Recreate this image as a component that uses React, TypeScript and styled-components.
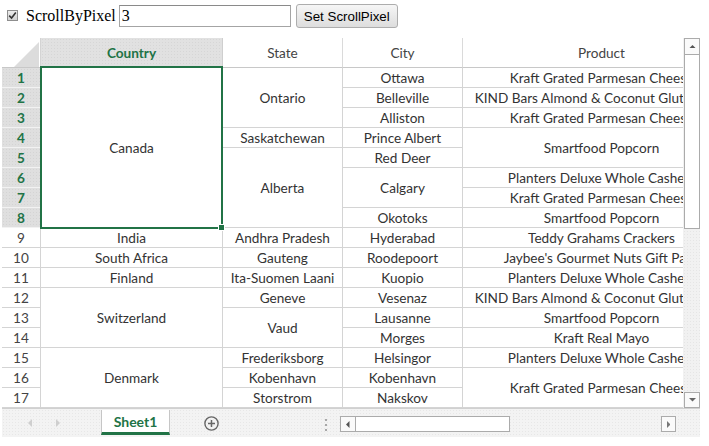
import React from "react";
import styled, { createGlobalStyle, css } from "styled-components";

const GREEN = "#217346";
const GRID = "#d4d4d4";
const FONT = `"Lato", "Open Sans", sans-serif`;

const Global = createGlobalStyle`
  html, body { margin: 0; padding: 0; background: #fff; }
  body { font-family: "Liberation Serif", serif; }
`;

const dotted = css`
  background-image: radial-gradient(rgba(0, 0, 0, 0.05) 0.8px, transparent 0.9px);
  background-size: 3px 3px;
`;

const Page = styled.div`
  width: 709px;
  height: 446px;
  overflow: hidden;
`;

const Toolbar = styled.div`
  display: flex;
  align-items: center;
  height: 24px;
  padding: 4px 0 0 7px;
`;

const CheckBox = styled.span`
  width: 11px;
  height: 11px;
  box-sizing: border-box;
  border: 1px solid #8e8e8e;
  background: linear-gradient(#ececec, #d2d2d2);
  display: flex;
  align-items: center;
  justify-content: center;
  margin: -2px 8px 0 0;
`;

const Label = styled.span`
  font: 16px "Liberation Serif", serif;
  color: #000;
  margin-right: 3px;
`;

const TextInput = styled.input`
  width: 172px;
  height: 22px;
  box-sizing: border-box;
  border: 1px solid #a4a4a4;
  border-top-color: #8a8a8a;
  padding: 0 2px;
  margin: 0 5px 0 0;
  font: 16px "Liberation Serif", serif;
  color: #000;
  outline: none;
`;

const Button = styled.button`
  width: 102px;
  height: 24px;
  box-sizing: border-box;
  padding: 0;
  border: 1px solid #adadad;
  border-radius: 3px;
  background: linear-gradient(#f6f6f6, #dddddd);
  font: 13.33px "Liberation Sans", Arial, sans-serif;
  color: #000;
`;

const Sheet = styled.div`
  margin: 10px 0 0 2px;
  width: 698px;
  display: grid;
  grid-template-columns: 681px 17px;
  grid-template-rows: 370px 29px;
`;

const Viewport = styled.div`
  position: relative;
  overflow: hidden;
  display: grid;
  grid-template-columns: 39px 182px 120px 120px 278px;
  grid-template-rows: 30px repeat(17, 20px);
  align-content: start;
  font-family: ${FONT};
  font-size: 13.6px;
`;

const Cell = styled.div<{ $row: number; $col: number; $span?: number }>`
  grid-row: ${(p) => p.$row} / span ${(p) => p.$span ?? 1};
  grid-column: ${(p) => p.$col};
  box-sizing: border-box;
  border-right: 1px solid ${GRID};
  border-bottom: 1px solid ${GRID};
  display: flex;
  align-items: center;
  justify-content: safe center;
  overflow: hidden;
  white-space: nowrap;
  color: #333;
  background: #fff;
`;

const Corner = styled.div`
  grid-row: 1;
  grid-column: 1;
  box-sizing: border-box;
  border-right: 1px solid ${GRID};
  border-bottom: 1px solid #c8c8c8;
  background: #fff;
  display: flex;
`;

const ColHead = styled.div<{ $col: number; $active?: boolean }>`
  grid-row: 1;
  grid-column: ${(p) => p.$col};
  box-sizing: border-box;
  border-right: 1px solid ${(p) => (p.$active ? "#cfcfcf" : "#dadada")};
  border-bottom: 1px solid #c8c8c8;
  display: flex;
  align-items: center;
  justify-content: center;
  overflow: hidden;
  white-space: nowrap;
  color: ${(p) => (p.$active ? GREEN : "#444")};
  font-weight: ${(p) => (p.$active ? 700 : 400)};
  background-color: ${(p) => (p.$active ? "#e1e1e1" : "#fff")};
  ${(p) => p.$active && dotted}
`;

const RowHead = styled.div<{ $row: number; $active?: boolean }>`
  grid-row: ${(p) => p.$row};
  grid-column: 1;
  box-sizing: border-box;
  border-right: 1px solid ${(p) => (p.$active ? "#cfcfcf" : GRID)};
  border-bottom: 1px solid ${(p) => (p.$active ? "#f2f2f2" : GRID)};
  display: flex;
  align-items: center;
  justify-content: center;
  color: ${(p) => (p.$active ? GREEN : "#444")};
  font-weight: ${(p) => (p.$active ? 700 : 400)};
  background-color: ${(p) => (p.$active ? "#dfdfdf" : "#fff")};
  ${(p) => p.$active && dotted}
`;

const Selection = styled.div`
  position: absolute;
  left: 38px;
  top: 28px;
  width: 183px;
  height: 163px;
  box-sizing: border-box;
  border: 2px solid ${GREEN};
  pointer-events: none;
`;

const Handle = styled.div`
  position: absolute;
  right: -4px;
  bottom: -4px;
  width: 7px;
  height: 7px;
  box-sizing: border-box;
  background: ${GREEN};
  border: 1px solid #fff;
`;

const VScroll = styled.div`
  padding-left: 1px;
  display: flex;
  flex-direction: column;
  background-color: #f1f1f1;
  ${dotted}
`;

const ScrollBtn = styled.div<{ $w?: number; $h?: number }>`
  width: ${(p) => p.$w ?? 16}px;
  height: ${(p) => p.$h ?? 17}px;
  flex: none;
  box-sizing: border-box;
  border: 1px solid #ababab;
  background: #fafafa;
  display: flex;
  align-items: center;
  justify-content: center;
`;

const VThumb = styled.div`
  width: 16px;
  height: 174px;
  box-sizing: border-box;
  border: 1px solid #ababab;
  border-top: none;
  background: #fff;
`;

const Fill = styled.div<{ $fixed?: number }>`
  flex: ${(p) => (p.$fixed ? `0 0 ${p.$fixed}px` : "1")};
`;

const TabBar = styled.div`
  grid-column: 1 / -1;
  display: flex;
  align-items: flex-start;
  border-top: 1px solid #d0d0d0;
  background-color: #f3f3f3;
  ${dotted}
  font-family: ${FONT};
`;

const Nav = styled.div`
  width: 99px;
  height: 28px;
  display: flex;
  align-items: center;
  gap: 24px;
  padding-left: 26px;
  box-sizing: border-box;
`;

const Tab = styled.div`
  width: 69px;
  height: 25px;
  margin-top: 1px;
  box-sizing: border-box;
  border-left: 1px solid #c6c6c6;
  border-right: 1px solid #c6c6c6;
  border-bottom: 3px solid ${GREEN};
  background: #fff;
  display: flex;
  align-items: center;
  justify-content: center;
  font-size: 14px;
  font-weight: 700;
  color: ${GREEN};
`;

const AddBtn = styled.div`
  margin: 7px 0 0 34px;
  width: 15px;
  height: 15px;
  display: flex;
`;

const Splitter = styled.div`
  margin: 10px 0 0 106px;
  width: 3px;
  display: flex;
  flex-direction: column;
  gap: 3px;
`;

const Dot = styled.span`
  width: 2px;
  height: 2px;
  background: #a8a8a8;
`;

const HScroll = styled.div`
  margin: 7px 0 0 12px;
  width: 339px;
  height: 16px;
  display: flex;
`;

const HThumb = styled.div`
  width: 154px;
  height: 16px;
  box-sizing: border-box;
  border: 1px solid #ababab;
  border-left: none;
  background: #fff;
`;

const Tri = ({ dir, color = "#555", size = 4 }: { dir: "up" | "down" | "left" | "right"; color?: string; size?: number }) => {
  const s = size;
  const pts =
    dir === "up"
      ? `0,${s} ${s},0 ${2 * s},${s}`
      : dir === "down"
      ? `0,0 ${2 * s},0 ${s},${s}`
      : dir === "left"
      ? `${s},0 ${s},${2 * s} 0,${s}`
      : `0,0 0,${2 * s} ${s},${s}`;
  const w = dir === "up" || dir === "down" ? 2 * s : s;
  const h = dir === "up" || dir === "down" ? s : 2 * s;
  return (
    <svg width={w} height={h} viewBox={`0 0 ${w} ${h}`}>
      <polygon points={pts} fill={color} />
    </svg>
  );
};

type Span = [string, number, number];

const countries: Span[] = [
  ["Canada", 1, 8],
  ["India", 9, 1],
  ["South Africa", 10, 1],
  ["Finland", 11, 1],
  ["Switzerland", 12, 3],
  ["Denmark", 15, 3],
];

const states: Span[] = [
  ["Ontario", 1, 3],
  ["Saskatchewan", 4, 1],
  ["Alberta", 5, 4],
  ["Andhra Pradesh", 9, 1],
  ["Gauteng", 10, 1],
  ["Ita-Suomen Laani", 11, 1],
  ["Geneve", 12, 1],
  ["Vaud", 13, 2],
  ["Frederiksborg", 15, 1],
  ["Kobenhavn", 16, 1],
  ["Storstrom", 17, 1],
];

const cities: Span[] = [
  ["Ottawa", 1, 1],
  ["Belleville", 2, 1],
  ["Alliston", 3, 1],
  ["Prince Albert", 4, 1],
  ["Red Deer", 5, 1],
  ["Calgary", 6, 2],
  ["Okotoks", 8, 1],
  ["Hyderabad", 9, 1],
  ["Roodepoort", 10, 1],
  ["Kuopio", 11, 1],
  ["Vesenaz", 12, 1],
  ["Lausanne", 13, 1],
  ["Morges", 14, 1],
  ["Helsingor", 15, 1],
  ["Kobenhavn", 16, 1],
  ["Nakskov", 17, 1],
];

const KRAFT = "Kraft Grated Parmesan Cheese";
const KIND = "KIND Bars Almond & Coconut Gluten Free";
const SMART = "Smartfood Popcorn";
const PLANT = "Planters Deluxe Whole Cashew";

const products: Span[] = [
  [KRAFT, 1, 1],
  [KIND, 2, 1],
  [KRAFT, 3, 1],
  [SMART, 4, 2],
  [PLANT, 6, 1],
  [KRAFT, 7, 1],
  [SMART, 8, 1],
  ["Teddy Grahams Crackers", 9, 1],
  ["Jaybee's Gourmet Nuts Gift Pack", 10, 1],
  [PLANT, 11, 1],
  [KIND, 12, 1],
  [SMART, 13, 1],
  ["Kraft Real Mayo", 14, 1],
  [PLANT, 15, 1],
  [KRAFT, 16, 2],
];

const columns: Span[][] = [countries, states, cities, products];
const headers = ["Country", "State", "City", "Product"];

export default function App() {
  const rows = Array.from({ length: 17 }, (_, i) => i + 1);
  return (
    <Page>
      <Global />
      <Toolbar>
        <CheckBox>
          <svg width="9" height="9" viewBox="0 0 9 9">
            <path d="M1.2 4.6 L3.6 7 L7.8 1.6" fill="none" stroke="#333" strokeWidth="1.6" />
          </svg>
        </CheckBox>
        <Label>ScrollByPixel</Label>
        <TextInput defaultValue="3" />
        <Button>Set ScrollPixel</Button>
      </Toolbar>
      <Sheet>
        <Viewport>
          <Corner>
            <svg width="38" height="29" viewBox="0 0 38 29">
              <polygon points="37,4 37,29 12,29" fill="#dcdcdc" />
            </svg>
          </Corner>
          {headers.map((h, i) => (
            <ColHead key={h} $col={i + 2} $active={i === 0}>
              {h}
            </ColHead>
          ))}
          {rows.map((r) => (
            <RowHead key={r} $row={r + 1} $active={r <= 8}>
              {r}
            </RowHead>
          ))}
          {columns.map((col, ci) =>
            col.map(([text, row, span]) => (
              <Cell key={`${ci}-${row}`} $row={row + 1} $col={ci + 2} $span={span}>
                <span>{text}</span>
              </Cell>
            ))
          )}
          <Selection>
            <Handle />
          </Selection>
        </Viewport>
        <VScroll>
          <ScrollBtn>
            <Tri dir="up" size={3.5} />
          </ScrollBtn>
          <VThumb />
          <Fill />
          <ScrollBtn $h={16}>
            <Tri dir="down" size={3.5} color="#666" />
          </ScrollBtn>
        </VScroll>
        <TabBar>
          <Nav>
            <Tri dir="left" size={4} color="#cfcfcf" />
            <Tri dir="right" size={4} color="#cfcfcf" />
          </Nav>
          <Tab>Sheet1</Tab>
          <AddBtn>
            <svg width="15" height="15" viewBox="0 0 15 15">
              <circle cx="7.5" cy="7.5" r="6.6" fill="none" stroke="#666" strokeWidth="1.4" />
              <path d="M7.5 4 V11 M4 7.5 H11" stroke="#666" strokeWidth="1.5" />
            </svg>
          </AddBtn>
          <Splitter>
            <Dot />
            <Dot />
            <Dot />
          </Splitter>
          <HScroll>
            <ScrollBtn $w={16} $h={16}>
              <Tri dir="left" size={3.5} />
            </ScrollBtn>
            <HThumb />
            <Fill />
            <ScrollBtn $w={15} $h={16}>
              <Tri dir="right" size={3.5} color="#777" />
            </ScrollBtn>
            <Fill $fixed={3} />
          </HScroll>
        </TabBar>
      </Sheet>
    </Page>
  );
}
